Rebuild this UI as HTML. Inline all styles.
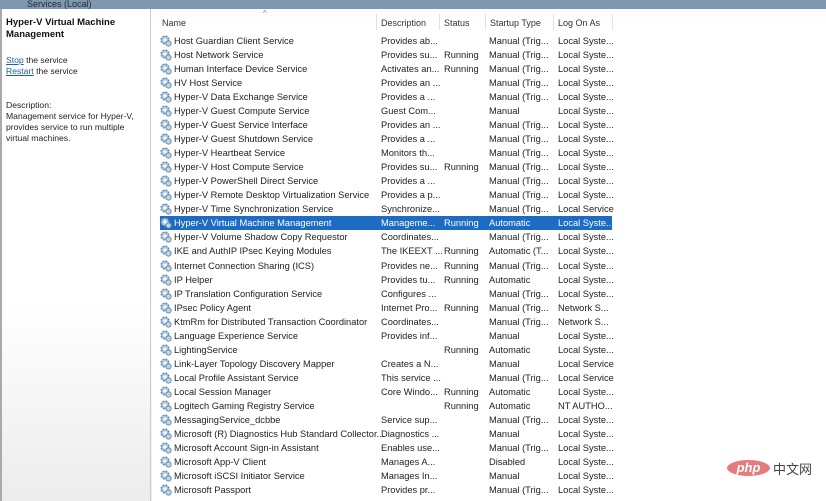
<!DOCTYPE html>
<html><head><meta charset="utf-8">
<style>
*{margin:0;padding:0;box-sizing:border-box}
html,body{width:826px;height:501px;overflow:hidden}
body{font-family:"Liberation Sans",sans-serif;font-size:9.3px;color:#222;background:linear-gradient(#fff 0%,#fdfdfd 55%,#eeeeee 100%);position:relative}
.top{position:absolute;left:0;top:0;width:826px;height:9px;background:#8097b0;overflow:hidden}
.top span{position:absolute;left:27px;top:-1px;color:#1d2a3a;font-size:9px}
.left{position:absolute;left:0;top:9px;width:151px;height:492px;border-left:2px solid #aaa;border-right:1px solid #ccc;background:linear-gradient(#fff 60%,#ececec)}
.left b{position:absolute;left:4px;top:8px;font-size:9.5px;line-height:12px;color:#111}
.left p{position:absolute;left:4px;font-size:8.6px;line-height:11px}
.left a{color:#1a5fa8;text-decoration:underline}
.right{position:absolute;left:152px;top:9px;width:674px;height:492px;border-top-left-radius:14px;background:linear-gradient(#fbfcfc,#fff 20px)}
.hdr{position:absolute;top:15px;font-size:9px;color:#333}
.div{position:absolute;top:14px;width:1px;height:16px;background:#e1e1e1}
.row{position:absolute;left:160px;width:452px;height:14px;line-height:14px;white-space:nowrap}
.row span{position:absolute;top:0}
.row svg{position:absolute;left:0;top:1px}
.c1{left:14px}.c2{left:221px}.c3{left:284px}.c4{left:329px}.c5{left:398px}
.sel{background:#1c6cc4;color:#fff}
.wm{position:absolute;left:727px;top:460px;width:43px;height:16px;border-radius:50%;background:#e57c7c;color:#fff;font-style:italic;font-weight:bold;font-size:13px;line-height:15px;text-align:center}
.wm2{position:absolute;left:773px;top:459px;font-family:"Noto Sans CJK SC",sans-serif;font-size:13px;color:#444}
</style></head><body>
<div class="top"><span>Services (Local)</span></div>
<div class="left">
<b>Hyper-V Virtual Machine<br>Management</b>
<p style="top:46px"><a>Stop</a> the service<br><a>Restart</a> the service</p>
<p style="top:91px">Description:<br>Management service for Hyper-V,<br>provides service to run multiple<br>virtual machines.</p>
</div>
<div class="right"></div>
<div class="hdr" style="left:162px;top:18px">Name</div>
<div class="hdr" style="left:263px;top:9px;font-size:8px;color:#888">^</div>
<div class="div" style="left:376px"></div>
<div class="hdr" style="left:381px;top:18px">Description</div>
<div class="div" style="left:439px"></div>
<div class="hdr" style="left:444px;top:18px">Status</div>
<div class="div" style="left:485px"></div>
<div class="hdr" style="left:490px;top:18px">Startup Type</div>
<div class="div" style="left:553px"></div>
<div class="hdr" style="left:558px;top:18px">Log On As</div>
<div class="div" style="left:612px"></div>
<svg width="0" height="0" style="position:absolute"><defs><g id="g"><circle cx="5" cy="5" r="4" fill="#a9c4dc" stroke="#5f86ad" stroke-width="1.2" stroke-dasharray="2 1.2"/><circle cx="5" cy="5" r="1.6" fill="#fff"/><circle cx="8.5" cy="8.5" r="2.6" fill="#c5d6e4" stroke="#6a8fb0" stroke-width="1"/></g></defs></svg>
<div id="rows"></div>
<div class="wm">php</div><div class="wm2">中文网</div>
<script>
var d=[
["Host Guardian Client Service","Provides ab...","","Manual (Trig...","Local Syste..."],
["Host Network Service","Provides su...","Running","Manual (Trig...","Local Syste..."],
["Human Interface Device Service","Activates an...","Running","Manual (Trig...","Local Syste..."],
["HV Host Service","Provides an ...","","Manual (Trig...","Local Syste..."],
["Hyper-V Data Exchange Service","Provides a ...","","Manual (Trig...","Local Syste..."],
["Hyper-V Guest Compute Service","Guest Com...","","Manual","Local Syste..."],
["Hyper-V Guest Service Interface","Provides an ...","","Manual (Trig...","Local Syste..."],
["Hyper-V Guest Shutdown Service","Provides a ...","","Manual (Trig...","Local Syste..."],
["Hyper-V Heartbeat Service","Monitors th...","","Manual (Trig...","Local Syste..."],
["Hyper-V Host Compute Service","Provides su...","Running","Manual (Trig...","Local Syste..."],
["Hyper-V PowerShell Direct Service","Provides a ...","","Manual (Trig...","Local Syste..."],
["Hyper-V Remote Desktop Virtualization Service","Provides a p...","","Manual (Trig...","Local Syste..."],
["Hyper-V Time Synchronization Service","Synchronize...","","Manual (Trig...","Local Service"],
["Hyper-V Virtual Machine Management","Manageme...","Running","Automatic","Local Syste..."],
["Hyper-V Volume Shadow Copy Requestor","Coordinates...","","Manual (Trig...","Local Syste..."],
["IKE and AuthIP IPsec Keying Modules","The IKEEXT ...","Running","Automatic (T...","Local Syste..."],
["Internet Connection Sharing (ICS)","Provides ne...","Running","Manual (Trig...","Local Syste..."],
["IP Helper","Provides tu...","Running","Automatic","Local Syste..."],
["IP Translation Configuration Service","Configures ...","","Manual (Trig...","Local Syste..."],
["IPsec Policy Agent","Internet Pro...","Running","Manual (Trig...","Network S..."],
["KtmRm for Distributed Transaction Coordinator","Coordinates...","","Manual (Trig...","Network S..."],
["Language Experience Service","Provides inf...","","Manual","Local Syste..."],
["LightingService","","Running","Automatic","Local Syste..."],
["Link-Layer Topology Discovery Mapper","Creates a N...","","Manual","Local Service"],
["Local Profile Assistant Service","This service ...","","Manual (Trig...","Local Service"],
["Local Session Manager","Core Windo...","Running","Automatic","Local Syste..."],
["Logitech Gaming Registry Service","","Running","Automatic","NT AUTHO..."],
["MessagingService_dcbbe","Service sup...","","Manual (Trig...","Local Syste..."],
["Microsoft (R) Diagnostics Hub Standard Collector...","Diagnostics ...","","Manual","Local Syste..."],
["Microsoft Account Sign-in Assistant","Enables use...","","Manual (Trig...","Local Syste..."],
["Microsoft App-V Client","Manages A...","","Disabled","Local Syste..."],
["Microsoft iSCSI Initiator Service","Manages In...","","Manual","Local Syste..."],
["Microsoft Passport","Provides pr...","","Manual (Trig...","Local Syste..."]];
var h="";
d.forEach(function(r,i){var t=33.5+i*14.06;
h+='<div class="row'+(i==13?' sel':'')+'" style="top:'+t.toFixed(1)+'px"><svg width="12" height="12"><use href="#g"/></svg>';
for(var k=0;k<5;k++)h+='<span class="c'+(k+1)+'">'+r[k]+'</span>';
h+='</div>';});
document.getElementById("rows").innerHTML=h;
</script>
</body></html>
